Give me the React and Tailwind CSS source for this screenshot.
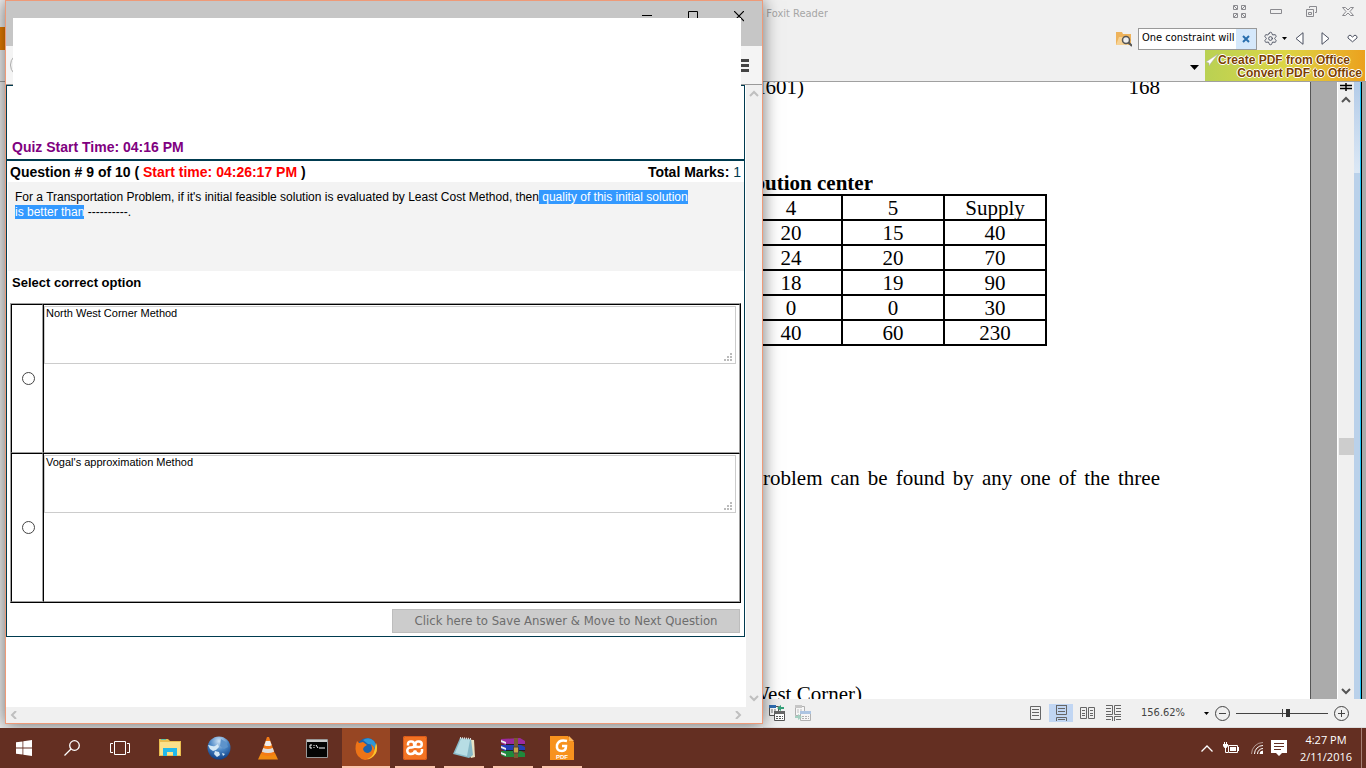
import { useState } from "react";
import { Settings } from "lucide-react";

const options = ["North West Corner Method", "Vogal's approximation Method"];

const supplyRows = [
  ["20", "15", "40"],
  ["24", "20", "70"],
  ["18", "19", "90"],
  ["0", "0", "30"],
  ["40", "60", "230"],
];

function Chevron({ className, d = "M1 6 L5 2 L9 6" }) {
  return (
    <svg width="10" height="8" viewBox="0 0 10 8" className={className}>
      <path d={d} fill="none" stroke="currentColor" strokeWidth="2" />
    </svg>
  );
}

function Caret() {
  return (
    <svg width="9" height="5" viewBox="0 0 9 5">
      <path d="M0 0h9L4.500 5z" fill="#000" />
    </svg>
  );
}

/* ---------- Quiz window ---------- */

function TitleBar() {
  return (
    <div className="flex h-[45px] shrink-0 items-start justify-end gap-9 bg-[#c6c6c6] pt-2.5 pr-[18px]">
      <button aria-label="Minimize" className="h-[11px] w-2.5">
        <svg width="10" height="11" viewBox="0 0 10 11">
          <path d="M0 4.500h10" stroke="#000" />
        </svg>
      </button>
      <button aria-label="Maximize" className="h-[11px] w-2.5">
        <svg width="10" height="11" viewBox="0 0 10 11">
          <path d="M.5.5h9v9h-9z" fill="none" stroke="#000" />
        </svg>
      </button>
      <button aria-label="Close" className="h-[11px] w-2.5">
        <svg width="10" height="11" viewBox="0 0 10 11">
          <path d="M0 0l10 10M10 0L0 10" stroke="#000" strokeWidth="1.200" />
        </svg>
      </button>
    </div>
  );
}

function Option({ text, index, selected, onSelect }) {
  return (
    <tr className="h-[149px]">
      <td className="w-8 border-t border-r border-b border-l border-t-black border-r-[#a0a0a0] border-b-[#a0a0a0] border-l-black p-0 pl-0.5">
        <input
          type="radio"
          name="answer"
          aria-label={text}
          checked={selected}
          onChange={() => onSelect(index)}
          className="mx-auto block size-[13px] appearance-none rounded-full border border-[#444] bg-white checked:border-4"
        />
      </td>
      <td className="border-t border-r border-b border-l border-t-black border-r-[#a0a0a0] border-b-[#a0a0a0] border-l-black p-0 pt-px pr-[3px] align-top">
        <div className="relative">
          <textarea
            readOnly
            aria-label={`Option ${index + 1}`}
            value={text}
            className="block h-[58px] w-full resize-none border border-[#ccc] px-px text-[11px] leading-3 outline-none"
          />
          <svg className="absolute right-1 bottom-[3px]" width="8" height="8" viewBox="0 0 8 8" fill="#bbb">
            <path d="M6 0h2v2H6zM3 3h2v2H3zM6 3h2v2H6zM0 6h2v2H0zM3 6h2v2H3zM6 6h2v2H6z" />
          </svg>
        </div>
      </td>
    </tr>
  );
}

function QuizWindow() {
  const [answer, setAnswer] = useState(null);

  return (
    <section className="relative z-10 mb-1 flex min-h-0 flex-col border border-[#ee9a78] bg-white shadow-[0_1px_16px_rgba(0,0,0,0.55)]">
      <TitleBar />
      <div className="flex h-[39px] shrink-0 items-center justify-between border-b border-[#999] bg-[#f4f4f4] pr-[13px] pl-1">
        <span className="size-6 rounded-full border border-[#aaa]" />
        <button aria-label="Open menu">
          <svg width="15" height="13" viewBox="0 0 15 13">
            <path d="M0 1.500h15M0 6.500h15M0 11.500h15" stroke="#444" strokeWidth="3" />
          </svg>
        </button>
      </div>
      {/* blank strip over the tabs and the address bar */}
      <div className="absolute top-[17px] right-[21px] left-[7px] h-[70px] bg-white" />

      <div className="flex min-h-0 flex-1">
        <div className="min-w-0 flex-1 overflow-hidden pr-px">
          <div className="border border-[#003b50] text-[14px] leading-4 font-bold">
            <div className="flex h-[75px] items-end border-b-2 border-[#003b50] px-[5px] pb-1 text-[#800080]">
              Quiz Start Time: 04:16 PM
            </div>
            <div className="flex h-[21px] items-center justify-between px-[3px]">
              <span className="whitespace-pre">
                Question # 9 of 10 ( <span className="text-[#f00]">Start time: 04:26:17 PM</span> )
              </span>
              <span>
                Total Marks: <span className="font-normal text-[#003b50]">1</span>
              </span>
            </div>
            <p className="ml-px h-[89px] bg-[#f3f3f3] px-[7px] pt-2 text-[12px] leading-[15px] font-normal whitespace-nowrap">
              For a Transportation Problem, if it's initial feasible solution is evaluated by Least Cost Method, then
              <mark className="bg-[#3399ff] text-white"> quality of this initial solution </mark>
              <br />
              <mark className="bg-[#3399ff] text-white">is better than</mark> ----------.
            </p>
            <h2 className="px-[5px] pt-1 pb-3 text-[13px] leading-4">Select correct option</h2>
            <div className="px-[3px] pb-[3px]">
              <table className="w-full border-separate border-spacing-0 border-t border-r border-b border-l border-t-[#a0a0a0] border-r-black border-b-black border-l-[#a0a0a0] font-normal">
                <tbody>
                  {options.map((text, i) => (
                    <Option key={text} text={text} index={i} selected={answer === i} onSelect={setAnswer} />
                  ))}
                </tbody>
              </table>
              <button className="mt-1.5 mr-px ml-auto block h-6 w-[348px] border border-[#bdbdbd] bg-[#ccc] font-['DejaVu_Sans_Condensed','DejaVu_Sans',sans-serif] text-[13px] font-normal text-[#6d6d6d]">
                Click here to Save Answer &amp; Move to Next Question
              </button>
            </div>
          </div>
        </div>
        <div className="flex w-4 shrink-0 flex-col items-center justify-between bg-[#f0f0f0] py-[5px] text-[#bfbfbf]">
          <Chevron />
          <Chevron d="M1 2 L5 6 L9 2" />
        </div>
      </div>
      <div className="flex h-4 shrink-0 items-center justify-between bg-[#f0f0f0] pr-5 pl-1 text-[#bfbfbf]">
        <Chevron d="M6 0 L2 4 L6 8" />
        <Chevron d="M4 0 L8 4 L4 8" />
      </div>
    </section>
  );
}

/* ---------- PDF reader ---------- */

function ReaderHeader() {
  return (
    <header className="flex h-[82px] shrink-0 flex-col border-b border-[#a0a0a0] bg-[#f0f0f0] font-['DejaVu_Sans_Condensed','DejaVu_Sans',sans-serif] text-[11px]">
      <div className="flex h-[27px] items-center justify-between pr-3">
        <div className="flex w-[65px] justify-end overflow-hidden pt-0.5 whitespace-nowrap text-[#a6a6a6]">- Foxit Reader</div>
        <div className="flex items-center gap-6 pb-1 text-[#8a8a8f]">
          <button aria-label="Full screen">
            <svg width="13" height="13" viewBox="0 0 13 13" fill="none" stroke="currentColor">
              <path d="M.5.5h4v4h-4zM8.500.5h4v4h-4zM.5 8.500h4v4h-4zM8.500 8.500h4v4h-4zM1 1l3 3M12 1L9 4M1 12l3-3M12 12L9 9" />
            </svg>
          </button>
          <button aria-label="Minimize">
            <svg width="12" height="13" viewBox="0 0 12 13" fill="none" stroke="currentColor">
              <path d="M.5 4.500h11v4H.5z" />
            </svg>
          </button>
          <button aria-label="Restore">
            <svg width="12" height="13" viewBox="0 0 12 13" fill="none" stroke="currentColor">
              <path d="M3.500 3V1.500h7v6H9M.5 4.500h7v7h-7zM2.500 7.500h3v2h-3z" />
            </svg>
          </button>
          <button aria-label="Close">
            <svg width="12" height="13" viewBox="0 0 12 13" fill="none" stroke="currentColor">
              <path d="M.5 2.500h3L6 5l2.500-2.500h3L8 6.500l3.500 4h-3L6 8l-2.500 2.500h-3L4 6.500z" />
            </svg>
          </button>
        </div>
      </div>
      <div className="flex h-[23px] items-center justify-end gap-1.5 pr-2">
        <button aria-label="Search folder">
          <svg width="16" height="16" viewBox="0 0 16 16">
            <path d="M0 1h6l1 2h8v11H0z" fill="#eeb35c" />
            <path d="M0 14L3 6h9v8z" fill="#f6d294" />
            <circle cx="10" cy="9" r="3.500" fill="#eee" stroke="#555" strokeWidth="1.500" />
            <path d="M12.500 11.500L16 15" stroke="#555" strokeWidth="2" />
          </svg>
        </button>
        <div className="flex h-[22px] w-[119px] border border-[#999] bg-white">
          <input
            aria-label="Find"
            defaultValue="One constraint will be"
            className="min-w-0 flex-1 pl-[3px] outline-none"
          />
          <button aria-label="Clear" className="flex w-5 items-center justify-center bg-[#d5e8fb]">
            <svg width="8" height="8" viewBox="0 0 8 8">
              <path d="M1 1l6 6M7 1L1 7" stroke="#2a6fae" strokeWidth="2" />
            </svg>
          </button>
        </div>
        <button aria-label="Settings" className="flex items-center gap-1">
          <Settings className="size-[15px] text-[#4b5060]" strokeWidth={1.5} />
          <svg width="5" height="3" viewBox="0 0 5 3">
            <path d="M0 0h5L2.500 3z" />
          </svg>
        </button>
        <div className="flex items-center gap-[17px] pl-0.5">
          <button aria-label="Previous">
            <svg width="9" height="13" viewBox="0 0 9 13" fill="#fff" stroke="#4b5060">
              <path d="M8 .7v11.600L1 6.500z" />
            </svg>
          </button>
          <button aria-label="Next">
            <svg width="9" height="13" viewBox="0 0 9 13" fill="#fff" stroke="#4b5060">
              <path d="M1 .7v11.600l7-5.800z" />
            </svg>
          </button>
          <button aria-label="Favorites">
            <svg width="11" height="9" viewBox="0 0 11 9" fill="#fff" stroke="#4b5060">
              <path d="M1 2.500L3 1l2.500 2L8 1l2 1.500V4L5.500 7.800 1 4z" />
            </svg>
          </button>
        </div>
      </div>
      <div className="flex flex-1 items-center justify-end gap-1.5">
        <button aria-label="Toolbar options" className="pt-1">
          <Caret />
        </button>
        <a
          href="#office"
          className="mr-px flex h-full w-40 flex-col justify-center bg-linear-to-r from-[#b9d153] via-[#dcd544] to-[#eba11d] pt-0.5 pr-[3px] text-right font-['Liberation_Sans',Arial,sans-serif] text-[12px] leading-[13px] font-bold whitespace-nowrap text-[#7c3f00] [text-shadow:1px_0_#fff,-1px_0_#fff,0_1px_#fff,0_-1px_#fff]"
        >
          <span className="flex items-start pr-3">
            <svg width="13" height="12" viewBox="0 0 13 12">
              <path d="M13 0L1 8l3 1v3l2-3z" fill="#fff" stroke="#aaa" strokeWidth=".5" />
            </svg>
            Create PDF from Office
          </span>
          <span>Convert PDF to Office</span>
        </a>
      </div>
    </header>
  );
}

function Page() {
  return (
    <article className="min-w-0 flex-1 overflow-hidden border-r border-[#555] bg-white pr-[150px] font-['Liberation_Serif','Times_New_Roman',serif] text-[21px] leading-6">
      <div className="-mt-[7px] flex justify-between">
        <span className="flex w-[41px] justify-end overflow-hidden">H601)</span>
        <span>168</span>
      </div>
      <div className="mt-[72px] flex w-[110px] justify-end overflow-hidden font-bold whitespace-nowrap">bution center</div>
      <div className="-mt-px flex w-[284px] justify-end overflow-hidden">
        <table className="w-[308px] shrink-0 table-fixed border-collapse text-center leading-[21px]">
          <thead>
            <tr>
              <th className="h-[25px] border-2 border-black p-0 pt-0.5 font-normal">4</th>
              <th className="border-2 border-black p-0 pt-0.5 font-normal">5</th>
              <th className="border-2 border-black p-0 pt-0.5 font-normal">Supply</th>
            </tr>
          </thead>
          <tbody>
            {supplyRows.map((row, i) => (
              <tr key={i}>
                {row.map((cell, j) => (
                  <td key={j} className="h-[25px] border-2 border-black p-0 pt-0.5">
                    {cell}
                  </td>
                ))}
              </tr>
            ))}
          </tbody>
        </table>
      </div>
      <p className="mt-[120px] whitespace-nowrap [text-align-last:justify]">roblem can be found by any one of the three</p>
      <div className="mt-48 flex w-[99px] justify-end overflow-hidden whitespace-nowrap">West Corner)</div>
    </article>
  );
}

function ReaderScrollbar() {
  return (
    <div className="flex w-[17px] shrink-0 flex-col items-center border-l border-white bg-[#f0f0f0] text-[#555]">
      <svg className="mt-px shrink-0" width="12" height="8" viewBox="0 0 12 8">
        <path d="M0 2.500h12M0 5.500h12M6 0v8" stroke="#000" strokeWidth="1.500" />
      </svg>
      <Chevron className="mt-[5px] shrink-0" />
      <div className="flex-[332]" />
      <div className="h-[17px] w-[15px] bg-[#cdcdcd]" />
      <div className="flex-[231]" />
      <Chevron className="mb-1 shrink-0" d="M1 2 L5 6 L9 2" />
    </div>
  );
}

function SheetsIcon({ dim }) {
  return (
    <svg width="16" height="16" viewBox="0 0 16 16" className={dim ? "opacity-40" : ""}>
      <path d="M.5 1.500h9v9h-9z" fill="#fff" stroke="#555" />
      <path d="M0 0h7v3H0z" fill={dim ? "#888" : "#2f6fb5"} />
      <path d="M2 5h6M2 7h6" stroke="#777" strokeDasharray="2 1" />
      <path d="M5.500 6.500h10v9h-10z" fill="#fff" stroke="#555" />
      <path d="M5 6h11v3H5z" fill={dim ? "#4a86cf" : "#666"} />
      <path d="M7 11.500h7M7 13.500h7" stroke="#555" strokeDasharray="2 1" />
      {dim ? (
        <path d="M0 11h3V9l4 3-4 3v-2H0z" fill="#35a079" />
      ) : (
        <path d="M15 2h-3V0L8 3l4 3V4h3z" fill="#35a079" />
      )}
    </svg>
  );
}

const viewIcons = [
  { name: "Single page", d: "M2.500 1.500h10v13h-10zM4 4.500h7M4 7.500h7M4 10.500h7" },
  { name: "Continuous", d: "M2.500 0v9.500h10V0M2.500.5h10M4 3.500h7M4 6.500h7M2.500 16v-3.500h10V16M4 14.500h7" },
  { name: "Facing", d: "M.5 2.500h6v11h-6zM8.500 2.500h6v11h-6zM2 5.500h3M2 8.500h3M2 10.500h3M10 5.500h3M10 8.500h3M10 10.500h3" },
  { name: "Continuous facing", d: "M0 .5h6.500v9H0M15 .5H8.500v9H15M0 3.500h5M0 6.500h5M10 3.500h5M10 6.500h5M0 11.500h6.500V16M15 11.500H8.500V16M0 14.500h5M10 14.500h5" },
];

function ReaderStatus() {
  return (
    <footer className="flex h-[29px] shrink-0 items-center border-b border-[#ddd] bg-[#f0f0f0] pr-[17px] pl-1.5 text-[#555]">
      <div className="flex gap-2.5">
        <button aria-label="Previous view">
          <SheetsIcon />
        </button>
        <button aria-label="Next view">
          <SheetsIcon dim />
        </button>
      </div>
      <div className="ml-auto flex gap-0.5">
        {viewIcons.map((icon, i) => (
          <button
            key={icon.name}
            aria-label={icon.name}
            className={`flex h-[18px] w-6 items-center justify-center ${i === 1 ? "bg-[#c1d6f3]" : ""}`}
          >
            <svg width="15" height="16" viewBox="0 0 15 16" fill="none" stroke="#666">
              <path d={icon.d} />
            </svg>
          </button>
        ))}
      </div>
      <select
        aria-label="Zoom"
        className="ml-4 w-[60px] appearance-none font-['DejaVu_Sans_Condensed','DejaVu_Sans',sans-serif] text-[11px] text-[#444]"
      >
        <option>156.62%</option>
      </select>
      <svg className="ml-[3px]" width="5" height="3" viewBox="0 0 5 3">
        <path d="M0 0h5L2.500 3z" fill="#000" />
      </svg>
      <button aria-label="Zoom out" className="ml-1.5">
        <svg width="15" height="15" viewBox="0 0 15 15" fill="none" stroke="#444">
          <circle cx="7.500" cy="7.500" r="7" />
          <path d="M4 7.500h7" />
        </svg>
      </button>
      <div className="relative mx-1.5 flex items-center">
        <input
          type="range"
          aria-label="Zoom level"
          defaultValue="57"
          className="h-2.5 w-[92px] appearance-none bg-[linear-gradient(#444,#444)] bg-size-[100%_1px] bg-center bg-no-repeat [&::-webkit-slider-thumb]:h-2 [&::-webkit-slider-thumb]:w-1 [&::-webkit-slider-thumb]:appearance-none [&::-webkit-slider-thumb]:bg-[#333]"
        />
        <span className="absolute left-1/2 h-2 w-px bg-[#444]" />
      </div>
      <button aria-label="Zoom in">
        <svg width="15" height="15" viewBox="0 0 15 15" fill="none" stroke="#444">
          <circle cx="7.500" cy="7.500" r="7" />
          <path d="M4 7.500h7M7.500 4v7" />
        </svg>
      </button>
    </footer>
  );
}

function Reader() {
  return (
    <section className="flex min-h-0 min-w-0 flex-col">
      <ReaderHeader />
      <div className="flex min-h-0 flex-1 bg-[#ababab]">
        <Page />
        <div className="w-[26px] shrink-0" />
        <ReaderScrollbar />
        <div className="w-2 shrink-0 border-r border-black bg-[#bad1ea]">
          <div className="h-full border-r border-[#1fc4f4]">
            <div className="h-[91px] bg-linear-to-b from-[#b3cbe8] to-[#dce8f5]" />
          </div>
        </div>
        <div className="w-1 shrink-0" />
      </div>
      <ReaderStatus />
    </section>
  );
}

/* ---------- Taskbar ---------- */

function ExplorerIcon() {
  return (
    <svg width="22" height="20" viewBox="0 0 22 20">
      <path d="M0 1h9l2 2h11v15H0z" fill="#e9bd4f" />
      <path d="M1 4h20v13H1z" fill="#fbe08a" />
      <path d="M2 1.500h5" stroke="#5dc4a9" />
      <path d="M4 10h14v8h-4v-4H8v4H4z" fill="#22b8ea" />
    </svg>
  );
}

function GlobeIcon() {
  return (
    <svg width="24" height="24" viewBox="0 0 24 24">
      <defs>
        <radialGradient id="globe" cx=".5" cy=".2" r=".8">
          <stop offset="0" stopColor="#cfe3f5" />
          <stop offset=".5" stopColor="#4a86c5" />
          <stop offset="1" stopColor="#0f3f85" />
        </radialGradient>
      </defs>
      <circle cx="12" cy="12" r="11.500" fill="url(#globe)" />
      <path d="M1 9c3 0 4 2 7 1l3-2 1 3-3 3-3 1-3-2zM8 15l4 1 1 3-3 2-3-3zM15 17l3 1-2 2z" fill="#d5e8f5" />
      <path d="M14 3l5 3 2 5-4 2-4-3z" fill="#5d93cb" />
    </svg>
  );
}

function VlcIcon() {
  return (
    <svg width="20" height="23" viewBox="0 0 20 23">
      <path d="M3 16h14l3 6.500H0z" fill="#f08a11" />
      <path d="M9 0h2l6 17q-7 4-14 0z" fill="#f47b16" />
      <path d="M7.900 4h4.200l1.600 4.200q-3.700 1.700-7.400 0z" fill="#eee" />
      <path d="M5.200 11q4.800 2 9.600 0l1.300 3.800q-6 2.500-12.200 0z" fill="#ddd" />
    </svg>
  );
}

function TerminalIcon() {
  return (
    <svg width="22" height="19" viewBox="0 0 22 19">
      <path d="M.5.5h21v18H.5z" fill="#050505" stroke="#999" />
      <path d="M1 1h20v2H1z" fill="#ccc" />
      <path d="M6 6H4v3h2M8 6v1M8 8v1M10 6l2 3M13 9h6" fill="none" stroke="#fff" />
    </svg>
  );
}

function FirefoxIcon() {
  return (
    <svg width="23" height="23" viewBox="0 0 23 23">
      <circle cx="12" cy="11" r="10" fill="#1a63ad" />
      <path d="M8 3q6-4 11 1 3 4 2 9-4-7-8-6z" fill="#2e97d8" />
      <path d="M2 4l2 2 4-1 4 3-3 2-1 2q1 4 5 4 4-1 4-5l-1-4 3 3q1 3 0 5l2-4V6q2 5 0 10-4 7-11 7Q1 21 .500 12 .500 7 2 4z" fill="#ed7417" />
      <path d="M21 6q2 5 0 10-4 6-9 6 6-2 7-7z" fill="#fbc52d" />
    </svg>
  );
}

function XamppIcon() {
  return (
    <svg width="24" height="24" viewBox="0 0 24 24">
      <rect width="24" height="24" rx="2" fill="#f27323" />
      <rect x=".5" y=".5" width="23" height="23" rx="2" fill="none" stroke="#d9591a" />
      <path
        d="M5 9.500V8a2.500 2.500 0 0 1 2.500-2.500h1A2.500 2.500 0 0 1 11 8q0 3 4 3h1a2.500 2.500 0 0 0 0-5.500h-1A2.500 2.500 0 0 0 12.500 8q0 3-4 3.500H7.500a3 3 0 0 0 0 6.500H8q3.500 0 4-3.500.5 3.500 4 3.500a3 3 0 0 0 3-3v-2"
        fill="none"
        stroke="#fff"
        strokeWidth="2.500"
      />
    </svg>
  );
}

function NotesIcon() {
  return (
    <svg width="23" height="22" viewBox="0 0 23 22">
      <path d="M9 2l12 1 1 17-4 1z" fill="#e7e2c4" />
      <path d="M7 1l11 1 2 16-4 3L0 17z" fill="#87b9c7" />
      <path d="M8 2l9 1-3 16-12-3z" fill="#b7dde4" />
      <path d="M7 1l11 1" stroke="#ddd" strokeWidth="2" strokeDasharray="1 1" />
    </svg>
  );
}

function WinrarIcon() {
  return (
    <svg width="24" height="20" viewBox="0 0 24 20">
      <path d="M0 1l19-1 5 3v4H4L0 5z" fill="#9b2a9e" />
      <path d="M0 7h20l4 2v4H4l-4-2z" fill="#243fb8" />
      <path d="M0 13h20l4 2v4H4l-4-2z" fill="#1f8a3c" />
      <path d="M0 2l5 2v2L0 4zM0 8l5 2v2L0 10zM0 14l5 2v2L0 16z" fill="#eee" />
      <path d="M5 6.500h19M5 12.500h19" stroke="#222" />
      <path d="M13 0h4v20h-4z" fill="#7a5a33" />
      <path d="M12.500 9h5v6h-5z" fill="#caa34a" stroke="#444" />
    </svg>
  );
}

function FoxitIcon() {
  return (
    <svg width="24" height="24" viewBox="0 0 24 24">
      <path d="M0 0h18l6 6v18H0z" fill="#f7921e" />
      <path d="M19 0l5 5h-5z" fill="#fbb65f" />
      <path d="M17 5q-8-2-10 4-1 6 5 6 4 0 4-5h-4" fill="none" stroke="#fff" strokeWidth="2.500" />
      <text x="12" y="23" textAnchor="middle" fontSize="6" fontWeight="bold" fill="#fff">
        PDF
      </text>
    </svg>
  );
}

const apps = [
  { name: "File Explorer", Icon: ExplorerIcon },
  { name: "Browser", Icon: GlobeIcon },
  { name: "VLC", Icon: VlcIcon },
  { name: "Command Prompt", Icon: TerminalIcon },
  { name: "Firefox", Icon: FirefoxIcon, active: true },
  { name: "XAMPP", Icon: XamppIcon, open: true },
  { name: "Notepad", Icon: NotesIcon, open: true },
  { name: "WinRAR", Icon: WinrarIcon, open: true },
  { name: "Foxit Reader", Icon: FoxitIcon, open: true },
];

function Taskbar() {
  return (
    <nav className="relative z-20 flex h-10 shrink-0 items-stretch bg-[#642f22] text-white">
      <button aria-label="Start" className="flex w-12 items-center justify-center">
        <svg width="16" height="16" viewBox="0 0 16 16" fill="#fff">
          <path d="M0 2.300L6.500 1.400v6.200H0zM7.300 1.300L16 0v7.600H7.300zM0 8.400h6.500v6.200L0 13.700zM7.300 8.400H16V16l-8.700-1.300z" />
        </svg>
      </button>
      <button aria-label="Search" className="flex w-12 items-center justify-center">
        <svg width="16" height="16" viewBox="0 0 16 16" fill="none" stroke="#fff" strokeWidth="1.300">
          <circle cx="10.500" cy="5.500" r="4.800" />
          <path d="M7 9L.5 15.500" />
        </svg>
      </button>
      <button aria-label="Task view" className="flex w-12 items-center justify-center">
        <svg width="20" height="14" viewBox="0 0 20 14" fill="none" stroke="#fff">
          <path d="M4.500.5h11v13h-11zM3 2.500H.5v9H3M17 2.500h2.500v9H17" />
        </svg>
      </button>
      <div className="ml-0.5 flex gap-px">
        {apps.map(({ name, Icon, active, open }) => (
          <button
            key={name}
            aria-label={name}
            className={`relative flex w-12 items-center justify-center ${active ? "bg-[#974623]" : ""}`}
          >
            <Icon />
            {active && <span className="absolute inset-x-0 bottom-0 h-0.5 bg-[#fbc5ad]" />}
            {open && <span className="absolute inset-x-1 bottom-0 h-0.5 bg-[#fbc5ad]" />}
          </button>
        ))}
      </div>
      <div className="ml-auto flex items-center">
        <button aria-label="Show hidden icons">
          <svg width="12" height="7" viewBox="0 0 12 7" fill="none" stroke="#fff" strokeWidth="1.300">
            <path d="M.5 6.500L6 1l5.500 5.500" />
          </svg>
        </button>
        <svg className="ml-2.5" width="16" height="12" viewBox="0 0 16 12" fill="none" stroke="#fff">
          <path d="M5.500 3.500h9v7h-9zM15.500 5v4M1.500 0v2M3.500 0v2M2.500 6v4.500H5" />
          <path d="M0 2h5v2L3.500 6h-2L0 4z" fill="#fff" stroke="none" />
          <path d="M7 5h6v4H7z" fill="#fff" stroke="none" />
        </svg>
        <svg className="ml-3" width="12" height="12" viewBox="0 0 12 12" fill="none" stroke="#fff">
          <path d="M.5 12A11.500 11.500 0 0 1 12 .5" opacity=".5" />
          <path d="M3.500 12A8.500 8.500 0 0 1 12 3.500M6.500 12A5.500 5.500 0 0 1 12 6.500" />
          <path d="M9 12a3 3 0 0 1 3-3v3z" fill="#fff" />
        </svg>
        <svg className="ml-2" width="16" height="16" viewBox="0 0 16 16">
          <path d="M0 0h16v13h-5l-3 3-3-3H0z" fill="#fff" />
          <path d="M3 3.500h10M3 6.500h10M3 9.500h7" stroke="#642f22" />
        </svg>
        <time className="ml-3 w-[54px] text-center font-['Open_Sans','Noto_Sans',sans-serif] text-[11px] leading-[17px]">
          4:27 PM
          <br />
          2/11/2016
        </time>
      </div>
      <div className="mr-1 ml-2 w-px bg-[#a58076]" />
    </nav>
  );
}

export default function App() {
  return (
    <div className="flex h-screen flex-col overflow-hidden bg-[#f0f0f0] font-['Liberation_Sans',Arial,sans-serif] text-black">
      <main className="grid min-h-0 flex-1 grid-cols-[5px_minmax(0,758fr)_minmax(0,603fr)] grid-rows-[minmax(0,1fr)]">
        <div className="flex flex-col bg-[#eee]">
          <div className="mt-[27px] h-[23px] bg-[#e87d00]" />
          <div className="mt-[31px] h-px bg-[#a0a0a0]" />
        </div>
        <QuizWindow />
        <Reader />
      </main>
      <Taskbar />
    </div>
  );
}
